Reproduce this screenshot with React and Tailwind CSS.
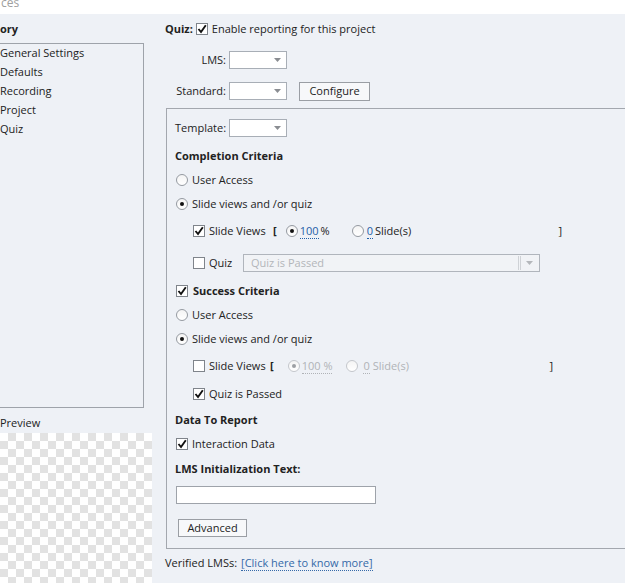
import React from "react";

function Check({ checked, disabled }) {
  return (
    <span className={"w-[12px] h-[12px] shrink-0 border bg-white flex items-center justify-center " + (disabled ? "border-[#b5b9bf]" : "border-[#7f848b]")}>
      {checked && (
        <svg width="10" height="10" viewBox="0 0 10 10">
          <path d="M1.5 5 L4 8 L8.8 1.2" fill="none" stroke="#111" strokeWidth="1.9" />
        </svg>
      )}
    </span>
  );
}

function Radio({ on, disabled }) {
  return (
    <span className={"w-[12px] h-[12px] shrink-0 rounded-full border bg-gradient-to-b from-[#f4f4f4] to-white flex items-center justify-center " + (disabled ? "border-[#c4c7cc]" : "border-[#959aa1]")}>
      {on && <span className={"w-[4px] h-[4px] rounded-full " + (disabled ? "bg-[#9da0a4]" : "bg-[#111]")} />}
    </span>
  );
}

function Arrow({ color = "#8a8d92" }) {
  return (
    <svg width="7" height="4" viewBox="0 0 7 4">
      <path d="M0 0 H7 L3.5 4 Z" fill={color} />
    </svg>
  );
}

function Dropdown({ className = "" }) {
  return (
    <div className={"h-[18px] border border-[#a8aeb6] bg-white flex items-center justify-end pr-[5px] shrink-0 " + className}>
      <Arrow />
    </div>
  );
}

export default function App() {
  return (
    <div className="w-[625px] h-[583px] overflow-hidden bg-[#eef1f6] text-[11px] leading-[16px] text-[#222] font-['Open_Sans',sans-serif] flex flex-col whitespace-nowrap">
      <div className="h-[14px] bg-white shrink-0 overflow-hidden">
        <div className="-mt-[5px] ml-[1px] text-[#a0a0a0] text-[12px] leading-[16px]">ces</div>
      </div>
      <div className="flex flex-1 min-h-0">
        {/* left column */}
        <div className="w-[165px] shrink-0 flex flex-col">
          <div className="mt-[7px] h-[16px] font-bold">ory</div>
          <div className="mt-[6px] h-[365px] ml-[-20px] w-[164px] border border-[#9ea3aa] flex flex-col">
            {["General Settings", "Defaults", "Recording", "Project", "Quiz"].map((t, i) => (
              <div key={t} className={"h-[19px] leading-[19px] pl-[19px] " + (i === 0 ? "-mt-[1px]" : "")}>{t}</div>
            ))}
          </div>
          <div className="mt-[7px] h-[16px]">Preview</div>
          <div className="mt-[2px] w-[152px] flex-1 bg-[image:conic-gradient(#e2e2e2_25%,#ffffff_0_50%,#e2e2e2_0_75%,#ffffff_0)] bg-[length:16px_16px]" />
        </div>

        {/* right column */}
        <div className="flex-1 flex flex-col min-w-0">
          <div className="mt-[7px] h-[16px] flex items-center">
            <span className="font-bold">Quiz:</span>
            <span className="ml-[3px]"><Check checked /></span>
            <span className="ml-[4px]">Enable reporting for this project</span>
          </div>
          <div className="mt-[14px] h-[18px] flex items-center">
            <span className="w-[61px] text-right">LMS:</span>
            <Dropdown className="ml-[3px] w-[58px]" />
          </div>
          <div className="mt-[13px] h-[18px] flex items-center">
            <span className="w-[61px] text-right">Standard:</span>
            <Dropdown className="ml-[3px] w-[58px]" />
            <button className="ml-[12px] w-[71px] h-[19px] border border-[#9a9ea4] bg-[#f7f8fa] text-[11px] text-[#222] flex items-center justify-center">Configure</button>
          </div>

          {/* panel */}
          <div className="mt-[8px] ml-[1px] w-[480px] border border-[#a3a7ae] flex flex-col pl-[8px] pb-[11px]">
            <div className="mt-[10px] h-[18px] flex items-center">
              <span className="w-[54px]">Template:</span>
              <Dropdown className="w-[58px]" />
            </div>
            <div className="mt-[11px] h-[16px] font-bold">Completion Criteria</div>
            <div className="mt-[8px] h-[16px] flex items-center ml-[1px]">
              <Radio />
              <span className="ml-[4px]">User Access</span>
            </div>
            <div className="mt-[8px] h-[16px] flex items-center ml-[1px]">
              <Radio on />
              <span className="ml-[4px]">Slide views and /or quiz</span>
            </div>
            <div className="mt-[11px] h-[16px] flex items-center ml-[18px] w-[369px]">
              <Check checked />
              <span className="ml-[4px] w-[64px]">Slide Views</span>
              <span className="font-bold">[</span>
              <span className="ml-[9px]"><Radio on /></span>
              <span className="ml-[2px] text-[#1f5ea8] border-b border-dotted border-[#1f5ea8] leading-[14px]">100</span>
              <span className="ml-[2px]">%</span>
              <span className="ml-[22px]"><Radio /></span>
              <span className="ml-[3px] text-[#1f5ea8] border-b border-dotted border-[#1f5ea8] leading-[14px]">0</span>
              <span className="ml-[2px]">Slide(s)</span>
              <span className="ml-auto">]</span>
            </div>
            <div className="mt-[15px] h-[18px] flex items-center ml-[18px]">
              <Check />
              <span className="ml-[4px] w-[34px]">Quiz</span>
              <div className="w-[297px] h-[18px] border border-[#b0b5bc] bg-[#f1f3f6] flex items-center pl-[7px] pr-[6px]">
                <span className="text-[#b3b6ba] flex-1">Quiz is Passed</span>
                <span className="w-[3px] h-[14px] border-x border-[#cfd2d6] mr-[5px]" />
                <Arrow color="#b4b7bb" />
              </div>
            </div>
            <div className="mt-[11px] h-[16px] flex items-center ml-[1px]">
              <Check checked />
              <span className="ml-[5px] font-bold">Success Criteria</span>
            </div>
            <div className="mt-[8px] h-[16px] flex items-center ml-[1px]">
              <Radio />
              <span className="ml-[4px]">User Access</span>
            </div>
            <div className="mt-[8px] h-[16px] flex items-center ml-[1px]">
              <Radio on />
              <span className="ml-[4px]">Slide views and /or quiz</span>
            </div>
            <div className="mt-[11px] h-[16px] flex items-center ml-[18px] w-[360px]">
              <Check />
              <span className="ml-[4px] w-[61px]">Slide Views</span>
              <span className="font-bold">[</span>
              <span className="ml-[14px]"><Radio on disabled /></span>
              <span className="ml-[2px] text-[#b0b3b7] border-b border-dotted border-[#b0b3b7] leading-[14px]">100 %</span>
              <span className="ml-[14px]"><Radio disabled /></span>
              <span className="ml-[5px] text-[#b0b3b7] border-b border-dotted border-[#b0b3b7] leading-[14px]">0</span>
              <span className="ml-[3px] text-[#b0b3b7]">Slide(s)</span>
              <span className="ml-auto">]</span>
            </div>
            <div className="mt-[12px] h-[16px] flex items-center ml-[18px]">
              <Check checked />
              <span className="ml-[4px]">Quiz is Passed</span>
            </div>
            <div className="mt-[10px] h-[16px] font-bold">Data To Report</div>
            <div className="mt-[8px] h-[16px] flex items-center ml-[1px]">
              <Check checked />
              <span className="ml-[4px]">Interaction Data</span>
            </div>
            <div className="mt-[9px] h-[16px] font-bold">LMS Initialization Text:</div>
            <div className="mt-[9px] ml-[1px] w-[200px] h-[18px] border border-[#9ea3aa] bg-white" />
            <button className="mt-[15px] ml-[3px] w-[69px] h-[18px] border border-[#9a9ea4] bg-[#f7f8fa] text-[11px] text-[#222] flex items-center justify-center">Advanced</button>
          </div>

          <div className="mt-[6px] h-[16px] flex items-center">
            <span>Verified LMSs:</span>
            <span className="ml-[4px] text-[#3569a8] border-b border-dotted border-[#3569a8] leading-[14px]">[Click here to know more]</span>
          </div>
        </div>
      </div>
    </div>
  );
}
